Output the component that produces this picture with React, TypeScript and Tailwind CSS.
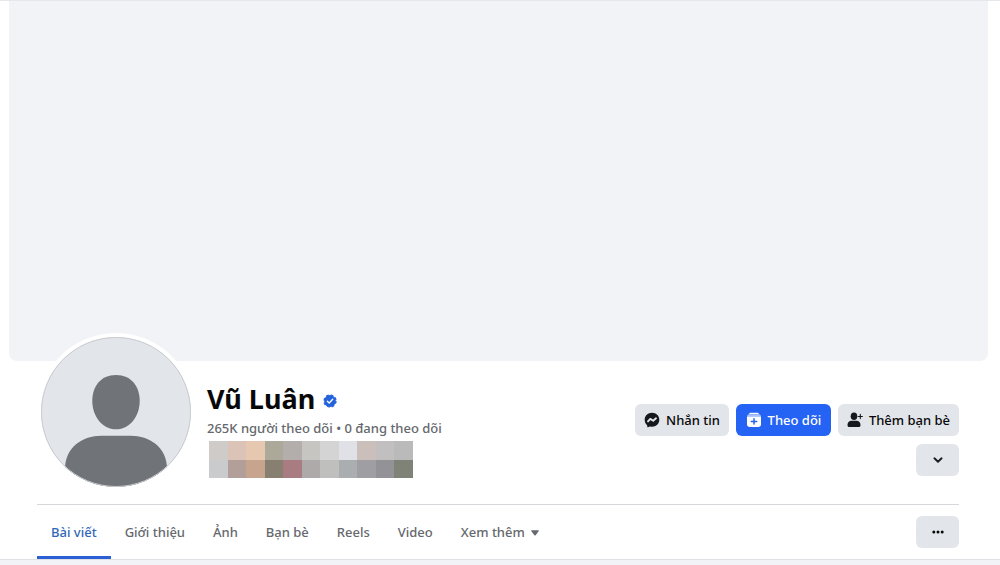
import React from 'react';

const tabs = ['Giới thiệu', 'Ảnh', 'Bạn bè', 'Reels', 'Video'];

const mosaic = [
  'bg-[#cfcbc8]', 'bg-[#dcc3b8]', 'bg-[#e6c7b0]', 'bg-[#ada99a]', 'bg-[#b3aeab]', 'bg-[#c6c5c2]',
  'bg-[#d4d4d4]', 'bg-[#dfe1e6]', 'bg-[#cabfba]', 'bg-[#c1bfc0]', 'bg-[#bababb]',
  'bg-[#c9cbcd]', 'bg-[#b39f99]', 'bg-[#c7a48d]', 'bg-[#878071]', 'bg-[#a87c80]', 'bg-[#aeaaaa]',
  'bg-[#bfbfbe]', 'bg-[#abaeb1]', 'bg-[#9f9ea2]', 'bg-[#939397]', 'bg-[#7f8377]',
];

function Avatar() {
  return (
    <div className="relative z-10 -mt-7 size-[158px] shrink-0 rounded-full bg-white p-1">
      <svg viewBox="0 0 150 150" className="size-full" role="img" aria-label="Vũ Luân">
        <defs>
          <clipPath id="avatar-clip">
            <circle cx="75" cy="75" r="75" />
          </clipPath>
        </defs>
        <g clipPath="url(#avatar-clip)">
          <rect width="150" height="150" fill="#e2e5e9" />
          <path
            d="M75 38C90.500 38 98.700 49.500 98.700 64C98.700 79 89 92.300 75 92.300C61 92.300 51.300 79 51.300 64C51.300 49.500 59.500 38 75 38Z"
            fill="#707378"
          />
          <path d="M24 132C24 110 42 98.800 60 98.800H90C108 98.800 126 110 126 132V150H24Z" fill="#707378" />
        </g>
        <circle cx="75" cy="75" r="74.500" fill="none" stroke="#c9cccf" />
      </svg>
    </div>
  );
}

function VerifiedIcon() {
  return (
    <svg viewBox="0 0 14 14" className="size-3.5" role="img" aria-label="Đã xác minh">
      <circle cx="7" cy="7" r="5.900" fill="#2563dc" />
      <circle cx="7" cy="7" r="6" fill="none" stroke="#2563dc" strokeWidth="1.300" strokeDasharray="2.700 2.012" />
      <path d="M4.300 7.200L6.200 9L9.700 5.200" fill="none" stroke="#fff" strokeWidth="1.300" strokeLinecap="round" strokeLinejoin="round" />
    </svg>
  );
}

function MessengerIcon() {
  return (
    <svg viewBox="0 0 16 16" className="size-4" aria-hidden="true">
      <path
        d="M8 .8C3.800.8.700 3.800.700 7.700C.700 9.800 1.500 11.600 2.900 12.900C3.100 13.100 3.200 13.300 3.200 13.500L3.300 14.800C3.300 15.200 3.700 15.500 4.100 15.300L5.600 14.600C5.800 14.500 5.900 14.500 6.100 14.600C6.700 14.700 7.300 14.800 8 14.800C12.200 14.800 15.300 11.700 15.300 7.800S12.200.8 8 .8Z"
        fill="#15181c"
      />
      <path d="M4 9.400L6.300 6.900L9.200 8.700L12 6.300" fill="none" stroke="#e2e5e9" strokeWidth="1.900" strokeLinecap="round" strokeLinejoin="round" />
    </svg>
  );
}

function FollowIcon() {
  return (
    <svg viewBox="0 0 16 16" className="size-4" aria-hidden="true">
      <path d="M5 .8H11C12.200.8 13 1.400 13.200 2.300H2.800C3 1.400 3.800.8 5 .8Z" fill="#fff" />
      <path d="M2.800 2.300H13.200C14.200 2.500 14.800 3.300 14.900 4.400H1.100C1.200 3.300 1.800 2.500 2.800 2.300Z" fill="#a9c2ff" />
      <path d="M1 4.400H15V12.200C15 14 14 15 12.200 15H3.800C2 15 1 14 1 12.200Z" fill="#fff" />
      <path d="M8 6.700V12.100M5.300 9.400H10.700" stroke="#2563f5" strokeWidth="1.500" strokeLinecap="round" />
    </svg>
  );
}

function AddFriendIcon() {
  return (
    <svg viewBox="0 0 16 16" className="size-4" aria-hidden="true">
      <ellipse cx="7" cy="4.300" rx="3.300" ry="3.800" fill="#15181c" />
      <path d="M4.500 8.800H9.500C12 8.800 13.500 10.600 13.500 13C13.500 14.400 12.800 15 11.800 15H2.200C1.200 15 .5 14.400 .5 13C.5 10.600 2 8.800 4.500 8.800Z" fill="#15181c" />
      <path d="M13.300 2.400V6.600M11.200 4.500H15.400" stroke="#15181c" strokeWidth="1.100" strokeLinecap="round" />
    </svg>
  );
}

const grayButton = 'flex h-8 items-center justify-center rounded-md bg-[#e2e5e9] text-[#080809]';

export default function App() {
  return (
    <main className="min-h-screen bg-[#f2f3f7] font-['Noto_Sans','Open_Sans',sans-serif] font-medium">
      <div className="border-b border-[#dfe0e3] border-t border-t-[#e6e7ea] bg-white">
        <div className="ml-[9px] mr-3 h-[360px] rounded-b-lg bg-[#f2f3f7]" />

        <div className="ml-[37px] mr-[41px]">
          <header className="flex h-[143px] items-start">
            <Avatar />
            <div className="ml-3 flex-1 pt-5">
              <div className="flex h-[35px] items-center gap-2">
                <h1 className="text-[27px] font-bold leading-8 text-[#080809]">Vũ Luân</h1>
                <span className="pt-1"><VerifiedIcon /></span>
              </div>
              <p className="pb-px text-[13px] leading-6 text-[#65686c]">265K người theo dõi • 0 đang theo dõi</p>
              <div className="ml-0.5 grid h-[37px] w-[204px] grid-cols-11 grid-rows-2">
                {mosaic.map((color, i) => (
                  <span key={i} className={color} />
                ))}
              </div>
            </div>
            <div className="flex flex-col items-end gap-2 pt-[43px] text-[13px]">
              <div className="flex gap-[7px]">
                <button type="button" className={`${grayButton} w-[94px] gap-1.5`}>
                  <MessengerIcon />
                  <span className="pt-0.5">Nhắn tin</span>
                </button>
                <button type="button" className="flex h-8 w-[95px] items-center justify-center gap-1.5 rounded-md bg-[#2563f5] text-white">
                  <FollowIcon />
                  <span className="pt-0.5">Theo dõi</span>
                </button>
                <button type="button" className={`${grayButton} w-[121px] gap-1.5`}>
                  <AddFriendIcon />
                  <span className="pt-0.5">Thêm bạn bè</span>
                </button>
              </div>
              <button type="button" aria-label="Tùy chọn khác" className={`${grayButton} w-[43px]`}>
                <svg viewBox="0 0 12 12" className="size-3" aria-hidden="true">
                  <path d="M2.400 4.300L6 7.700L9.600 4.300" fill="none" stroke="#1c1e21" strokeWidth="1.900" strokeLinecap="round" strokeLinejoin="round" />
                </svg>
              </button>
            </div>
          </header>

          <div className="flex h-[55px] items-center justify-between border-t border-[#d5d7da]">
            <nav className="flex h-full text-[13px] text-[#65686c]">
              <a href="#posts" aria-current="page" className="flex items-center border-b-3 border-[#2a5fd6] px-3.5 pt-[5px] text-[#2f68b8]">
                Bài viết
              </a>
              {tabs.map((tab) => (
                <a key={tab} href="#section" className="flex items-center px-3.5 pt-0.5">
                  {tab}
                </a>
              ))}
              <button type="button" className="flex items-center gap-1.5 px-3.5 pt-0.5">
                Xem thêm
                <svg viewBox="0 0 8 6" className="h-1.5 w-2" aria-hidden="true">
                  <path d="M.8.3H7.200C7.800.3 8 .8 7.600 1.300L4.600 5.200C4.300 5.700 3.700 5.700 3.400 5.200L.4 1.300C0 .8.200.3.800.3Z" fill="#65686c" />
                </svg>
              </button>
            </nav>
            <button type="button" aria-label="Xem thêm tùy chọn" className={`${grayButton} w-[43px]`}>
              <svg viewBox="0 0 12 4" className="h-1 w-3" aria-hidden="true">
                <circle cx="1.800" cy="2" r="1.500" fill="#080809" />
                <circle cx="6" cy="2" r="1.500" fill="#080809" />
                <circle cx="10.200" cy="2" r="1.500" fill="#080809" />
              </svg>
            </button>
          </div>
        </div>
      </div>
    </main>
  );
}
